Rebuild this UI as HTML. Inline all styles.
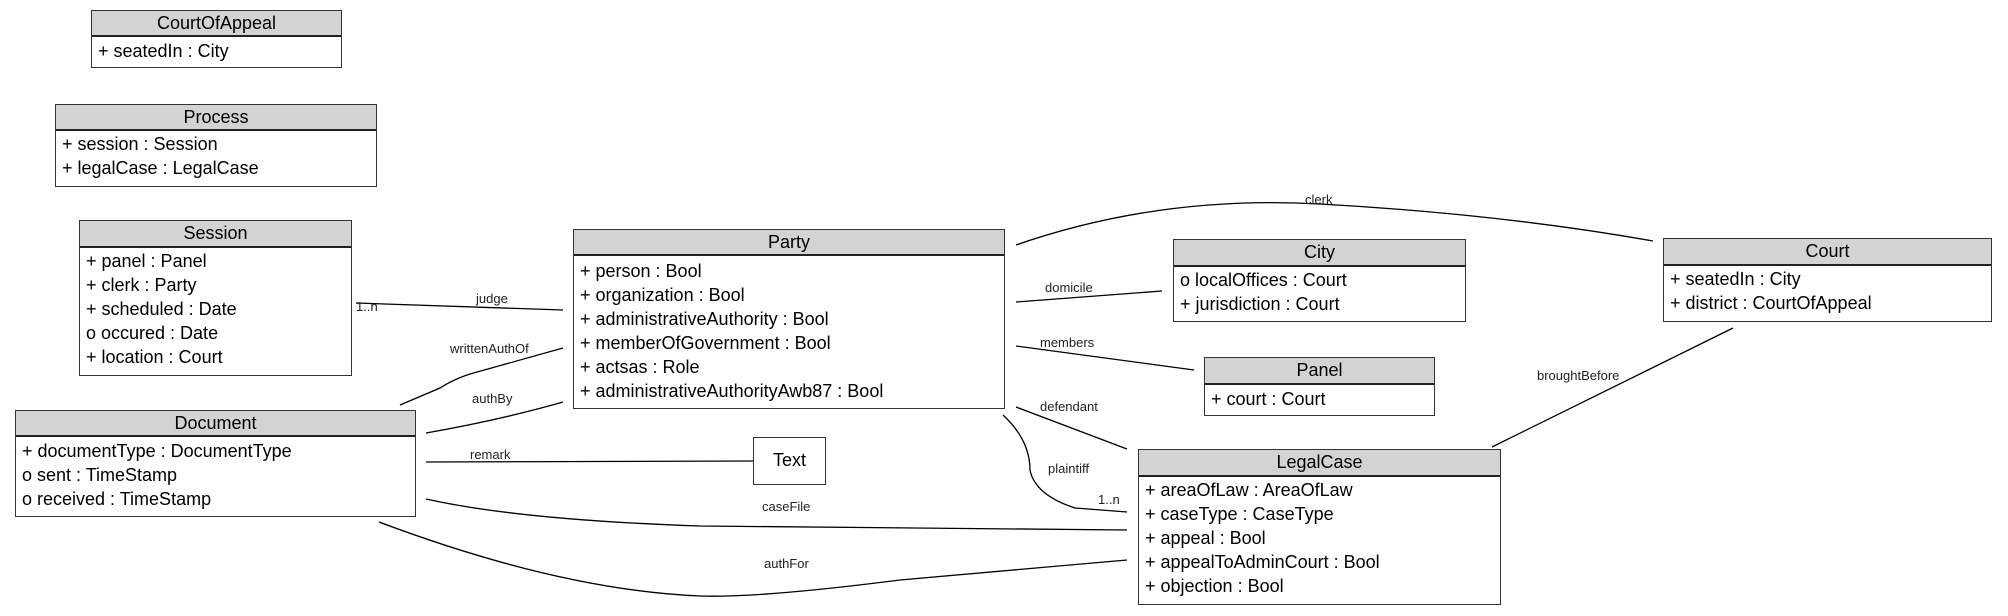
<!DOCTYPE html>
<html><head><meta charset="utf-8"><style>
body{margin:0;width:2008px;height:616px;background:#fff;position:relative;overflow:hidden;font-family:"Liberation Sans",sans-serif;}
.b{position:absolute;border:1.5px solid #333;background:#fff;box-sizing:border-box;}
.h{background:#d3d3d3;border-bottom:2px solid #222;text-align:center;font-size:18px;color:#000;box-sizing:border-box;}
.r{font-size:18px;line-height:24px;padding-left:6px;white-space:nowrap;color:#000;}
.rs{padding-top:3px;}
svg{position:absolute;left:0;top:0;}
svg text{font-family:"Liberation Sans",sans-serif;font-size:13px;fill:#222;}
</style></head><body>
<svg width="2008" height="616" fill="none" stroke="#000" stroke-width="1.3">
<path d="M356 303 L563 310"/>
<path d="M400 405 L440 388 Q452 380 470 374 L563 348"/>
<path d="M426 433 Q500 420 563 402"/>
<path d="M426 462 L753 461"/>
<path d="M426 499 Q520 520 700 526 L1127 530"/>
<path d="M379 522 Q560 590 700 596 Q760 598 900 580 L1127 560"/>
<path d="M1016 245 Q1160 195 1320 204 Q1500 214 1653 241"/>
<path d="M1016 302 L1162 291"/>
<path d="M1016 346 L1194 370"/>
<path d="M1016 407 L1127 449"/>
<path d="M1003 415 Q1030 440 1030 470 Q1035 495 1075 508 L1127 512"/>
<path d="M1733 328 L1492 447"/>
<g stroke="none">
<text x="356" y="311">1..n</text>
<text x="476" y="303">judge</text>
<text x="450" y="353">writtenAuthOf</text>
<text x="472" y="403">authBy</text>
<text x="470" y="459">remark</text>
<text x="762" y="511">caseFile</text>
<text x="764" y="568">authFor</text>
<text x="1305" y="204">clerk</text>
<text x="1045" y="292">domicile</text>
<text x="1040" y="347">members</text>
<text x="1040" y="411">defendant</text>
<text x="1048" y="473">plaintiff</text>
<text x="1098" y="504">1..n</text>
<text x="1537" y="380">broughtBefore</text>
</g>
</svg>

<div class="b" style="left:91px;top:10px;width:251px;height:58px"><div class="h" style="height:26px;line-height:24px">CourtOfAppeal</div><div class="r" style="padding-top:2px">+ seatedIn : City</div></div>

<div class="b" style="left:55px;top:104px;width:322px;height:83px"><div class="h" style="height:26px;line-height:24px">Process</div><div class="r" style="padding-top:1px">+ session : Session</div><div class="r">+ legalCase : LegalCase</div></div>

<div class="b" style="left:79px;top:220px;width:273px;height:156px"><div class="h" style="height:27px;line-height:25px">Session</div><div class="r" style="padding-top:1px">+ panel : Panel</div><div class="r">+ clerk : Party</div><div class="r">+ scheduled : Date</div><div class="r">o occured : Date</div><div class="r">+ location : Court</div></div>

<div class="b" style="left:15px;top:410px;width:401px;height:107px"><div class="h" style="height:26px;line-height:24px">Document</div><div class="r" style="padding-top:2px">+ documentType : DocumentType</div><div class="r">o sent : TimeStamp</div><div class="r">o received : TimeStamp</div></div>

<div class="b" style="left:573px;top:229px;width:432px;height:180px"><div class="h" style="height:26px;line-height:24px">Party</div><div class="r rs">+ person : Bool</div><div class="r">+ organization : Bool</div><div class="r">+ administrativeAuthority : Bool</div><div class="r">+ memberOfGovernment : Bool</div><div class="r">+ actsas : Role</div><div class="r">+ administrativeAuthorityAwb87 : Bool</div></div>

<div class="b" style="left:1173px;top:239px;width:293px;height:83px"><div class="h" style="height:27px;line-height:25px">City</div><div class="r" style="padding-top:1px">o localOffices : Court</div><div class="r">+ jurisdiction : Court</div></div>

<div class="b" style="left:1204px;top:357px;width:231px;height:59px"><div class="h" style="height:27px;line-height:25px">Panel</div><div class="r" style="padding-top:2px">+ court : Court</div></div>

<div class="b" style="left:1663px;top:238px;width:329px;height:84px"><div class="h" style="height:27px;line-height:25px">Court</div><div class="r" style="padding-top:1px">+ seatedIn : City</div><div class="r">+ district : CourtOfAppeal</div></div>

<div class="b" style="left:753px;top:437px;width:73px;height:48px;font-size:18px;text-align:center;line-height:45px">Text</div>

<div class="b" style="left:1138px;top:449px;width:363px;height:156px"><div class="h" style="height:27px;line-height:25px">LegalCase</div><div class="r" style="padding-top:1px">+ areaOfLaw : AreaOfLaw</div><div class="r">+ caseType : CaseType</div><div class="r">+ appeal : Bool</div><div class="r">+ appealToAdminCourt : Bool</div><div class="r">+ objection : Bool</div></div>
</body></html>
